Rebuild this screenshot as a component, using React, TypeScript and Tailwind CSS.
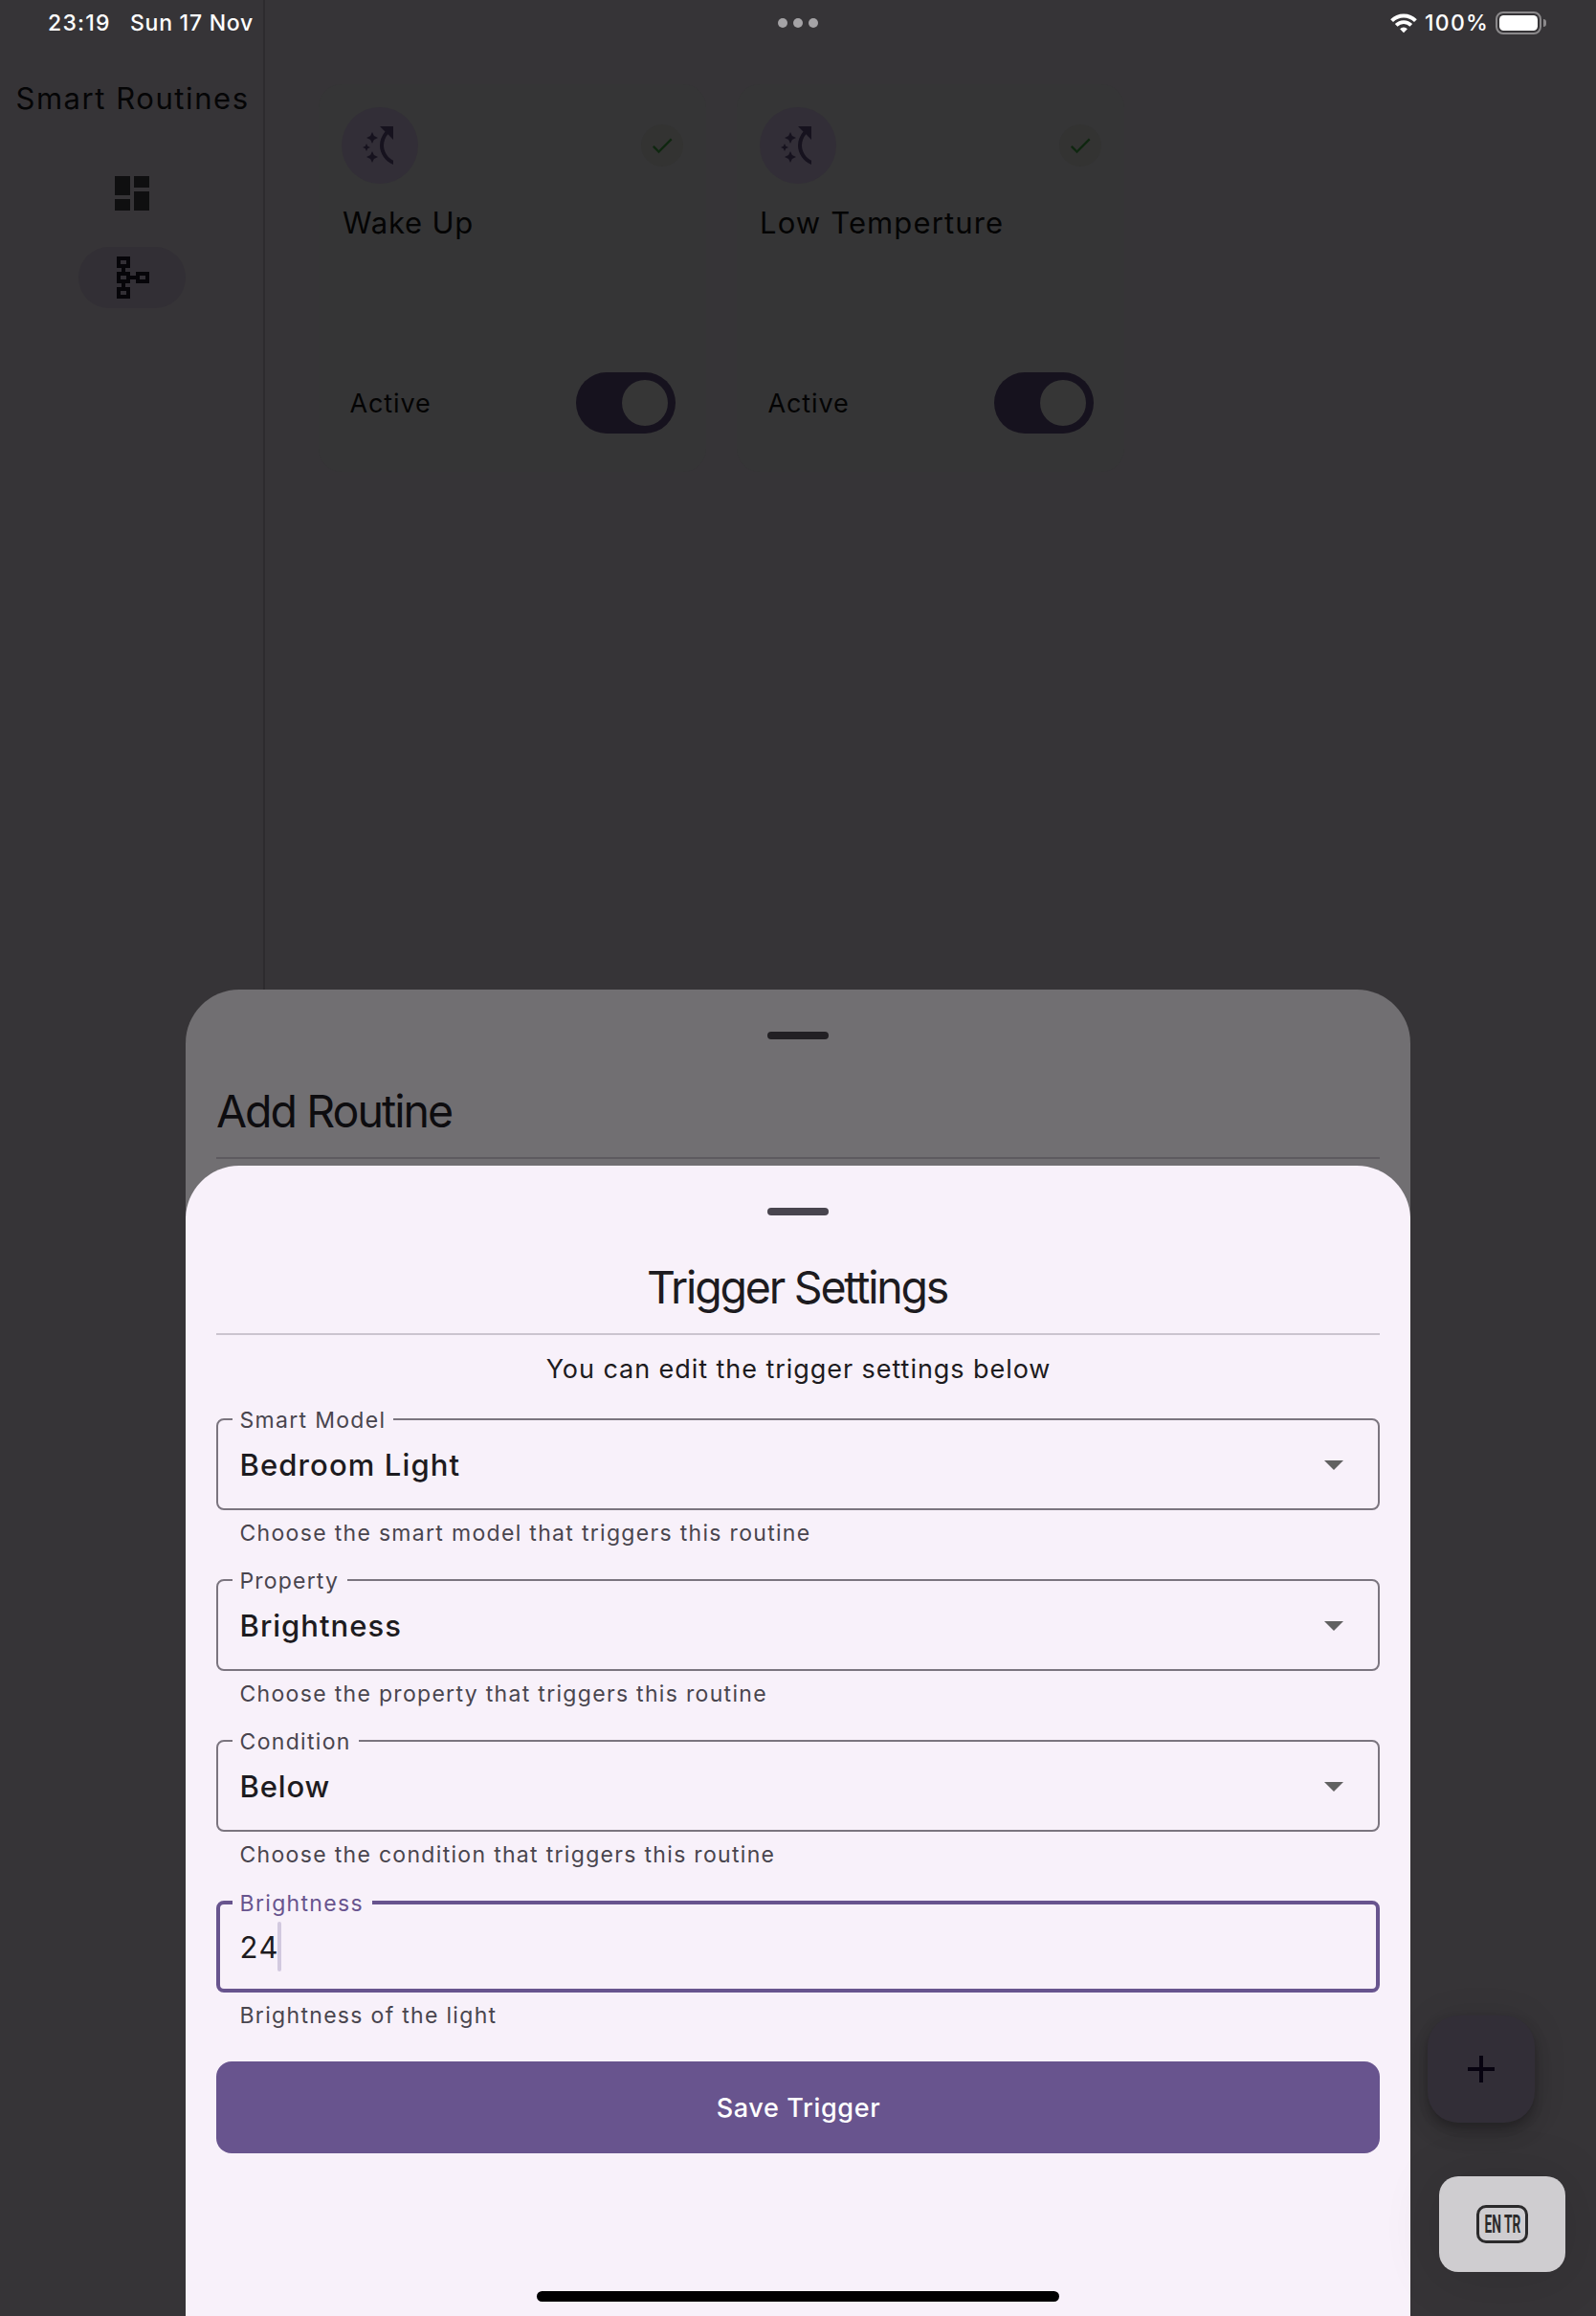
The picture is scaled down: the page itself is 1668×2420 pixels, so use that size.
import type { ReactNode } from "react";
import {
  MdAdd,
  MdArrowDropDown,
  MdDashboard,
  MdDone,
  MdOutlineSchema,
  MdSwitchAccessShortcut,
} from "react-icons/md";

function StatusBar() {
  return (
    <div className="absolute inset-x-0 top-0 flex h-12 items-center text-[23px] leading-[48px] font-medium text-white">
      <div className="flex flex-1 pl-[50px]">
        <span className="w-[86px] tracking-[1.22px]">23:19</span>
        <span className="tracking-[0.74px]">Sun 17 Nov</span>
      </div>
      <div className="flex gap-1.5">
        <i className="size-2.5 rounded-full bg-[#a5a3a6]" />
        <i className="size-2.5 rounded-full bg-[#a5a3a6]" />
        <i className="size-2.5 rounded-full bg-[#a5a3a6]" />
      </div>
      <div className="flex flex-1 items-center justify-end pr-[50px]">
        <svg width="28" height="21" viewBox="0 0 28 21" className="mr-2" fill="none">
          <path d="M1.6 7.6a17.6 17.6 0 0 1 24.8 0" stroke="white" strokeWidth="4" />
          <path d="M6.2 12.3a11 11 0 0 1 15.6 0" stroke="white" strokeWidth="3.8" />
          <path d="M14 20.2l-3.9-4a5.6 5.6 0 0 1 7.8 0z" fill="white" />
        </svg>
        <span className="w-[74px] tracking-[1.25px]">100%</span>
        <span className="flex h-6 w-12 rounded-[8px] border-2 border-[#8b898b] p-[2px]">
          <i className="flex-1 rounded-[4.5px] bg-white" />
        </span>
        <i className="mr-[2px] ml-0.5 h-2 w-[3px] rounded-r-full bg-[#8b898b]" />
      </div>
    </div>
  );
}

function Rail() {
  return (
    <nav className="flex w-[277px] shrink-0 flex-col items-center border-r-2 border-[#2d2b2e] pt-[78px]">
      <h1 className="pl-[2px] text-[31px] leading-[50px] tracking-[1.56px] whitespace-nowrap text-[#050506]">
        Smart Routines
      </h1>
      <MdDashboard className="mt-[50px] size-12 text-[#0f0f10]" />
      <div className="mt-8 flex h-16 w-28 items-center justify-center rounded-full bg-[#322f35]">
        <MdOutlineSchema className="size-12 text-[#060509]" />
      </div>
    </nav>
  );
}

function RoutineCard({ children }: { children: ReactNode }) {
  return (
    <article className="flex h-[405px] flex-col rounded-3xl bg-[#353536] px-6 pt-6 pb-8 text-[#040404]">
      <div className="flex items-center justify-between">
        <div className="flex size-20 items-center justify-center rounded-full bg-[#322e37]">
          <MdSwitchAccessShortcut className="size-12 text-[#16121e]" />
        </div>
        <div className="flex size-11 items-center justify-center rounded-full bg-[#333332]">
          <MdDone className="size-7 text-[#0f2710]" />
        </div>
      </div>
      {children}
      <div className="mt-auto flex h-20 items-center justify-between px-2">
        <span className="pt-px pl-[0.5px] text-[27px] leading-10 tracking-[0.88px]">Active</span>
        <span className="flex h-16 w-[104px] items-center justify-end rounded-full bg-[#16121e] pr-2">
          <i className="size-12 rounded-full bg-[#363636]" />
        </span>
      </div>
    </article>
  );
}

function Sheet({
  title,
  titleClass,
  className,
  handleClass,
  lineClass,
  children,
}: {
  title: string;
  titleClass: string;
  className: string;
  handleClass: string;
  lineClass: string;
  children?: ReactNode;
}) {
  return (
    <section
      className={`absolute bottom-0 left-[194px] flex w-[1280px] flex-col rounded-t-[56px] px-8 pt-11 ${className}`}
    >
      <i className={`h-2 w-16 self-center rounded-full ${handleClass}`} />
      <h2 className={`mt-[38px] text-[46.5px] leading-[74px] ${titleClass}`}>{title}</h2>
      <hr className={`mt-[11px] border-0 border-t-2 ${lineClass}`} />
      {children}
    </section>
  );
}

function Field({
  label,
  labelClass,
  value,
  valueClass,
  helper,
  focused = false,
}: {
  label: string;
  labelClass: string;
  value: string;
  valueClass: string;
  helper: string;
  focused?: boolean;
}) {
  return (
    <div className="mb-8">
      <div
        className={`relative flex h-24 items-center rounded-[8px] ${
          focused ? "border-4 border-[#68548e] pl-[20.5px]" : "border-2 border-[#7b757f] pr-[22px] pl-[22.5px]"
        }`}
      >
        <span
          className={`absolute bg-[#f8f1fa] pl-[7.5px] text-[23px] leading-7 whitespace-nowrap ${
            focused ? "-top-[15px] left-[13px] text-[#68548e]" : "-top-[14px] left-[15px] text-[#49454e]"
          } ${labelClass}`}
        >
          {label}
        </span>
        <span className={`pt-[2px] text-[31px] leading-[50px] text-[#1d1b20] ${valueClass}`}>{value}</span>
        {focused ? (
          <i className="absolute top-[18px] left-[60px] h-[52px] w-1 rounded-full bg-[#d2c9df]" />
        ) : (
          <MdArrowDropDown className="ml-auto size-12 text-[#616161]" />
        )}
      </div>
      <p className="mt-2 pl-[24.5px] text-[23px] leading-8 tracking-[1.31px] text-[#49454e]">{helper}</p>
    </div>
  );
}

export default function App() {
  return (
    <div className="relative h-[2420px] w-[1668px] overflow-hidden bg-[#363437] font-[Inter,sans-serif]">
      <div className="flex h-full">
        <Rail />
        <main className="grid flex-1 grid-cols-3 content-start gap-8 px-14 pt-[88px]">
          <RoutineCard>
            <h3 className="mt-4 pl-px text-[31px] leading-[50px] tracking-[0.8px]">Wake Up</h3>
          </RoutineCard>
          <RoutineCard>
            <h3 className="mt-4 text-[31px] leading-[50px] tracking-[1.13px]">Low Temperture</h3>
          </RoutineCard>
        </main>
      </div>
      <button className="absolute right-16 bottom-[202px] flex size-28 items-center justify-center rounded-[32px] bg-[#322e37] text-[#070310] shadow-[0_6px_10px_rgba(0,0,0,0.18),0_12px_20px_rgba(0,0,0,0.12),0_2px_36px_rgba(0,0,0,0.1)]">
        <MdAdd className="size-12" />
      </button>

      <Sheet
        title="Add Routine"
        titleClass="tracking-[-1.97px] text-[#0d0c0f]"
        className="top-[1034px] bg-[#716f72]"
        handleClass="bg-[#222024]"
        lineClass="border-[#5d5a5f]"
      />
      <Sheet
        title="Trigger Settings"
        titleClass="pr-[2px] text-center tracking-[-2.22px] text-[#1d1b20]"
        className="top-[1218px] bg-[#f8f1fa]"
        handleClass="bg-[#49454e]"
        lineClass="border-[#cbc4cf]"
      >
        <p className="mt-[9px] mb-6 pl-px text-center text-[27px] leading-[54px] tracking-[0.945px] text-[#1d1b20]">
          You can edit the trigger settings below
        </p>
        <Field
          label="Smart Model"
          labelClass="w-[168px] tracking-[1.3px]"
          value="Bedroom Light"
          valueClass="font-medium tracking-[1.12px]"
          helper="Choose the smart model that triggers this routine"
        />
        <Field
          label="Property"
          labelClass="w-[120px] tracking-[1.18px]"
          value="Brightness"
          valueClass="font-medium tracking-[1.02px]"
          helper="Choose the property that triggers this routine"
        />
        <Field
          label="Condition"
          labelClass="w-[132px] tracking-[1.33px]"
          value="Below"
          valueClass="font-medium tracking-[0.85px]"
          helper="Choose the condition that triggers this routine"
        />
        <Field
          focused
          label="Brightness"
          labelClass="w-[145.5px] tracking-[1.33px]"
          value="24"
          valueClass="tracking-[1.6px]"
          helper="Brightness of the light"
        />
        <button className="h-24 rounded-2xl bg-[#68548e] pt-[2px] pl-px text-[27px] font-medium tracking-[0.64px] text-white">
          Save Trigger
        </button>
      </Sheet>

      <StatusBar />
      <div className="absolute right-8 bottom-[46px] flex h-[100px] w-[132px] items-center justify-center rounded-[20px] bg-[#cfcdd0] shadow-[0_4px_60px_rgba(0,0,0,0.12)]">
        <div className="flex h-10 w-[54px] items-center justify-center rounded-[10px] border-3 border-[#2b2a2b] text-[#2b2a2b]">
          <span className="scale-x-[0.55] font-[Roboto,sans-serif] text-[25px] leading-none font-bold whitespace-nowrap">
            EN TR
          </span>
        </div>
      </div>
      <div className="absolute bottom-[15px] left-[561px] h-[11px] w-[546px] rounded-full bg-black" />
    </div>
  );
}
